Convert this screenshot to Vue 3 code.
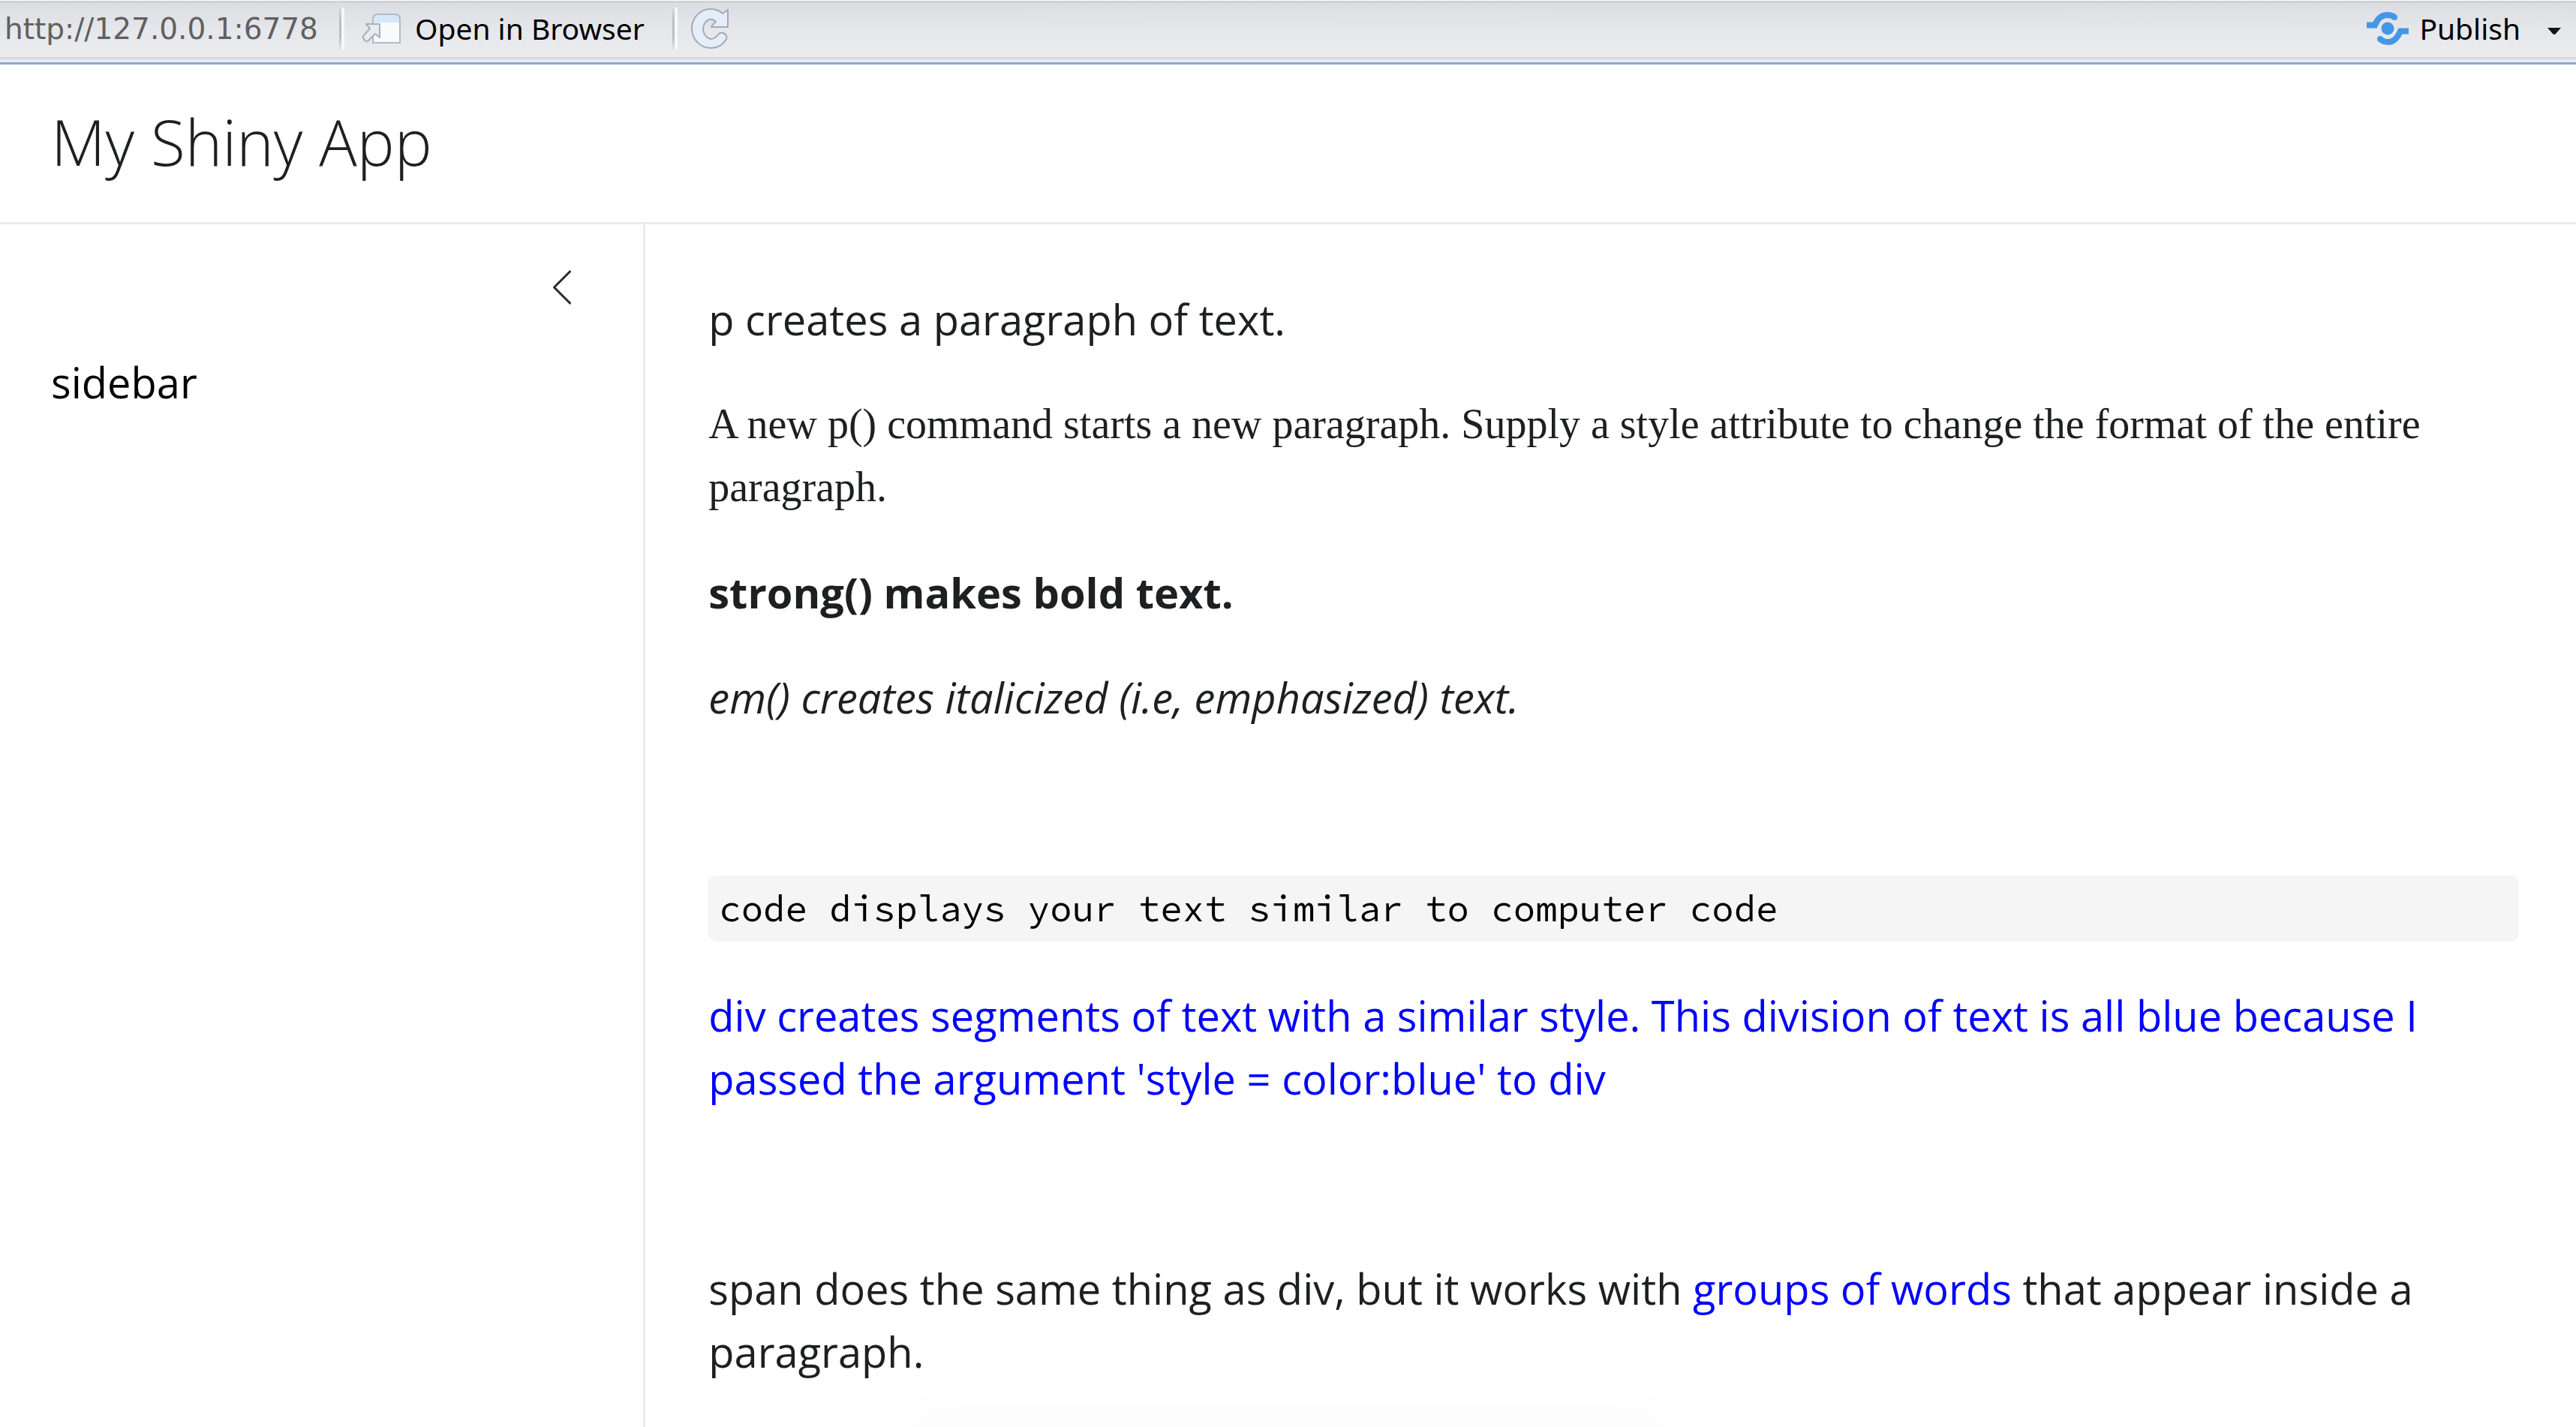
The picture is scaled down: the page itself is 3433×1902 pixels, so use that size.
<script setup>
const url = 'http://127.0.0.1:6778'
</script>

<template>
  <div class="viewer">
    <nav class="toolbar" aria-label="Viewer">
      <span class="url">{{ url }}</span>
      <span class="divider"></span>
      <button class="tool open" type="button">
        <svg width="54" height="42" viewBox="0 0 54 42" aria-hidden="true">
          <path d="M15 40V9q0-7 7-7h22q7 0 7 7v31z" fill="#f8fafc" />
          <path d="M15 13V9q0-7 7-7h22q7 0 7 7v4z" fill="#d5e8fa" />
          <path d="M15 40V9q0-7 7-7h22q7 0 7 7v31z" fill="none" stroke="#aebcc6" stroke-width="2" />
          <path d="M6 15H24V33L18 28L8 38Q5 39 2 34Q1 32 3 30L11 21Z" fill="#ebebef" stroke="#a3b2bc" stroke-width="2" stroke-linejoin="round" />
        </svg>
        Open in Browser
      </button>
      <span class="divider"></span>
      <button class="tool reload" type="button" aria-label="Refresh">
        <svg width="52" height="56" viewBox="0 0 52 56" aria-hidden="true">
          <path d="M49 3V26H27Q27 24 33 19Q29 15 24 16A14 14 0 0 0 26 42Q32 42 37 35Q39 33 43 34Q49 37 47 42Q40 54 26 54A25 26 0 0 1 26 2Q35 2 42 8Z" fill="#e5edf9" stroke="#a2aab6" stroke-width="2" stroke-linejoin="round" />
        </svg>
      </button>
      <span class="spacer"></span>
      <button class="tool publish" type="button">
        <svg width="56" height="44" viewBox="0 0 56 44" aria-hidden="true" fill="none" stroke="#4398e6" stroke-width="8">
          <path d="M0 17.500H11C15 8 20 4 27 4C32 4 35 5 37 7" />
          <circle cx="37" cy="7" r="4" fill="#4398e6" stroke="none" />
          <path d="M56 25.500H45C41 35 36 40 29 40C24 40 21 39 18 36" />
          <circle cx="18" cy="36" r="4" fill="#4398e6" stroke="none" />
          <circle cx="28" cy="22" r="8.500" fill="#4398e6" stroke="none" />
        </svg>
        Publish
      </button>
      <button class="tool menu" type="button" aria-label="Publish options">
        <svg width="18" height="10" viewBox="0 0 18 10" aria-hidden="true">
          <path d="M0 0H18L11 8Q9 10 7 8Z" fill="#151515" />
        </svg>
      </button>
    </nav>

    <header class="title">
      <h1>My Shiny App</h1>
    </header>

    <div class="layout">
      <aside class="sidebar">
        <button class="collapse" type="button" aria-label="Toggle sidebar">
          <svg width="56" height="56" viewBox="0 0 16 16" aria-hidden="true">
            <path d="M11 2L5 8L11 14" fill="none" stroke="#2a2c2e" stroke-width="0.900" stroke-linecap="round" stroke-linejoin="round" />
          </svg>
        </button>
        <div class="sidebar-text">sidebar</div>
      </aside>
      <main class="content">
        <p>p creates a paragraph of text.</p>
        <p class="times">A new p() command starts a new paragraph. Supply a style attribute to change the format of the entire paragraph.</p>
        <p><strong>strong() makes bold text.</strong></p>
        <p><em>em() creates italicized (i.e, emphasized) text.</em></p>
        <br>
        <code>code displays your text similar to computer code</code>
        <div class="blue">div creates segments of text with a similar style. This division of text is all blue because I passed the argument 'style = color:blue' to div</div>
        <br>
        <p class="closing">span does the same thing as div, but it works with <span class="blue">groups of words</span> that appear inside a paragraph.</p>
      </main>
    </div>
  </div>
</template>

<style>
body {
  margin: 0;
  background: #fff;
}
</style>

<style scoped>
.viewer {
  position: relative;
  display: flex;
  flex-direction: column;
  min-height: 100vh;
  box-sizing: border-box;
  overflow: hidden;
  color: #1d1f21;
  font: 56px/84px "Open Sans", "Noto Sans", sans-serif;
}

/* faint shadow rising from the lower edge of the pane */
.viewer::after {
  position: absolute;
  bottom: -20px;
  left: 35%;
  width: 30%;
  height: 20px;
  box-shadow: 0 0 80px rgba(0, 0, 0, 0.06);
  content: "";
}

.toolbar {
  display: flex;
  align-items: center;
  box-sizing: border-box;
  height: 86px;
  padding: 0 20px 7px 6px;
  border-bottom: 3px solid #8ea6d8;
  background:
    linear-gradient(#efeff1 0 2px, #b3b5b9 2px 3px, transparent 3px),
    linear-gradient(transparent 76px, #d6d8dc 76px 79px, #e9eaed 79px),
    linear-gradient(#dbdce1, #e6e7eb 40px, #ebecf0 76px);
  color: #000;
  font: 39px/48px "Noto Sans", sans-serif;
}

.url {
  padding-top: 2px;
  color: #606060;
  font-family: "DejaVu Sans", sans-serif;
}

.divider {
  width: 3px;
  height: 56px;
  margin-left: 28px;
  border-right: 4px solid #f7f7f9;
  background: linear-gradient(#d8d9dd, #bcbdc0 30%, #bcbdc0 70%, #e2e3e6);
}

.tool {
  display: flex;
  align-items: center;
  padding: 0;
  border: 0;
  background: none;
  color: inherit;
  font: inherit;
}

.tool svg {
  display: block;
}

.open {
  gap: 17px;
  margin-left: 23px;
}

.divider ~ .divider {
  margin-left: 37px;
}

.reload {
  margin-left: 18px;
}

.spacer {
  flex: 1;
}

.publish {
  gap: 14px;
}

.menu {
  margin-left: 36px;
  padding-top: 8px;
}

.title {
  padding: 40px 68px 44px;
  border-bottom: 3px solid #ebebeb;
}

.title h1 {
  margin: 0;
  font-size: 84px;
  font-weight: 300;
  line-height: 126px;
}

.layout {
  display: flex;
  flex: 1;
}

.sidebar {
  display: flex;
  flex-direction: column;
  box-sizing: border-box;
  width: calc(25% + 2px);
  flex: none;
  padding: 56px 80px 56px 68px;
  border-right: 3px solid #ebebeb;
  color: #000;
}

.collapse {
  align-self: flex-end;
  padding: 0;
  border: 0;
  background: none;
}

.collapse svg {
  display: block;
}

.sidebar-text {
  margin-top: 56px;
}

.content {
  flex: 1;
  min-width: 0;
  padding: 84px 76px 0 84px;
}

.content p {
  margin: 0 0 56px;
}

.content .closing {
  margin-top: 56px;
}

.times {
  font-family: "Liberation Serif", serif;
}

.content code {
  display: block;
  margin: 56px 0;
  padding: 7px 14px;
  border-radius: 10px;
  background: #f5f5f5;
  color: #000;
  font: 49px/74px "Source Code Pro", "DejaVu Sans Mono", monospace;
}

.blue {
  color: #00f;
}

div.blue {
  margin-bottom: 56px;
}
</style>
